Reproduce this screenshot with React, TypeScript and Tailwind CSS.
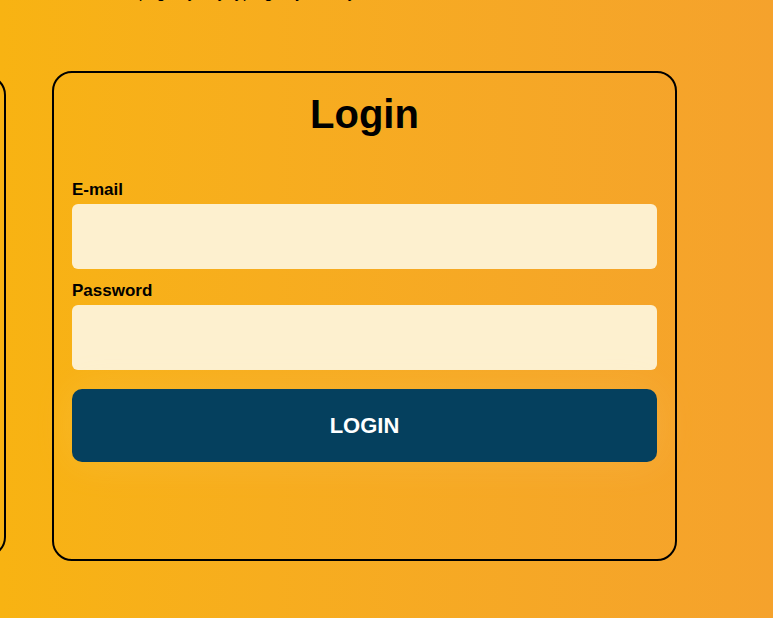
export default function App() {
  return (
    <div
      className="min-h-screen w-full overflow-hidden bg-gradient-to-r from-[#f8b312] to-[#f5a22c] text-black"
      style={{ fontFamily: '"Liberation Sans", Arial, sans-serif' }}
    >
      {/* intro line, scrolled mostly off screen */}
      <p className="-mt-[16px] h-[18px] pl-[112px] text-[16px] leading-[18px] whitespace-nowrap">
        the page by any typing of your key
      </p>

      <div className="mt-[69px] -ml-[574px] flex items-center gap-[46px]">
        {/* previous card, partly off screen */}
        <div className="h-[482px] w-[580px] shrink-0 rounded-[20px] border-2 border-black" />

        {/* login card */}
        <div className="h-[490px] w-[625px] shrink-0 rounded-[20px] border-2 border-black px-[18px] pt-[18px]">
          <h1 className="text-center text-[40px] font-bold leading-[46px]">Login</h1>

          <form className="mt-[43px] flex flex-col" onSubmit={e => e.preventDefault()}>
            <label className="text-[17px] font-bold leading-[20px]">E-mail</label>
            <input
              type="email"
              className="mt-[4px] h-[65px] w-full rounded-[6px] bg-[#fdf0cf] px-4 text-[16px] outline-none"
            />

            <label className="mt-[12px] text-[17px] font-bold leading-[20px]">Password</label>
            <input
              type="password"
              className="mt-[4px] h-[65px] w-full rounded-[6px] bg-[#fdf0cf] px-4 text-[16px] outline-none"
            />

            <button
              type="submit"
              className="mt-[19px] h-[73px] w-full rounded-[10px] bg-[#05405e] text-[22px] font-bold text-white shadow-[0_0_40px_rgba(255,235,190,0.12)]"
            >
              LOGIN
            </button>
          </form>
        </div>
      </div>
    </div>
  )
}
